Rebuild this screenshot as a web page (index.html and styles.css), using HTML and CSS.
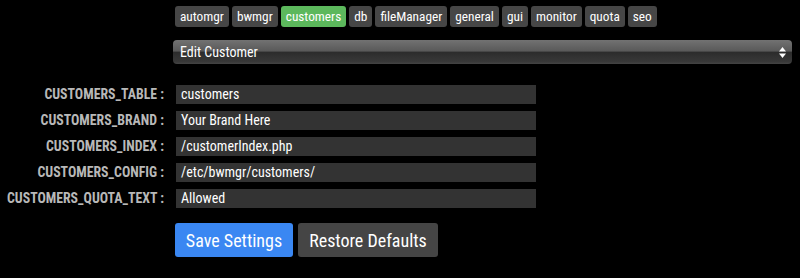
FILE: index.html
```html
<!DOCTYPE html>
<html>
<head>
<meta charset="utf-8">
<link rel="stylesheet" href="styles.css">
</head>
<body>
<div class="page">
  <div class="tabs">
    <span class="tab">automgr</span>
    <span class="tab">bwmgr</span>
    <span class="tab active">customers</span>
    <span class="tab">db</span>
    <span class="tab">fileManager</span>
    <span class="tab">general</span>
    <span class="tab">gui</span>
    <span class="tab">monitor</span>
    <span class="tab">quota</span>
    <span class="tab">seo</span>
  </div>
  <div class="select">
    <span class="select-text">Edit Customer</span>
    <svg class="arrows" width="7" height="11" viewBox="0 0 7 11"><polygon points="3.5,0 7,4.5 0,4.5" fill="#fff"/><polygon points="0,6.5 7,6.5 3.5,11" fill="#fff"/></svg>
  </div>
  <div class="form">
    <label class="label">CUSTOMERS_TABLE :</label>
    <div class="input">customers</div>
    <label class="label">CUSTOMERS_BRAND :</label>
    <div class="input">Your Brand Here</div>
    <label class="label">CUSTOMERS_INDEX :</label>
    <div class="input">/customerIndex.php</div>
    <label class="label">CUSTOMERS_CONFIG :</label>
    <div class="input">/etc/bwmgr/customers/</div>
    <label class="label">CUSTOMERS_QUOTA_TEXT :</label>
    <div class="input">Allowed</div>
  </div>
  <div class="buttons">
    <button class="btn btn-primary">Save Settings</button>
    <button class="btn btn-default">Restore Defaults</button>
  </div>
</div>
</body>
</html>
```

FILE: styles.css
```css
html, body {
  margin: 0;
  padding: 0;
  background: #000;
  font-family: "Roboto Condensed", "Liberation Sans Narrow", "Arial Narrow", Roboto, sans-serif;
  color: #fff;
}
.page {
  width: 800px;
  height: 278px;
  overflow: hidden;
}
.tabs {
  display: flex;
  gap: 3px;
  padding: 6px 0 0 175px;
}
.tab {
  background: #464646;
  color: #fff;
  font-size: 13.3px;
  line-height: 21px;
  height: 21px;
  padding: 0 5px;
  border-radius: 3px;
}
.tab.active {
  background: #5cb85c;
}
.select {
  margin: 13px 0 0 173px;
  width: 619px;
  height: 24px;
  box-sizing: border-box;
  border-radius: 4px;
  background: linear-gradient(#727272 0%, #5a5a5a 45%, #2c2c2c 52%, #383838 90%, #444 100%);
  display: flex;
  align-items: center;
  justify-content: space-between;
  padding: 0 6px 0 7px;
}
.select-text {
  font-size: 14px;
}
.form {
  display: grid;
  grid-template-columns: 164px 360px;
  column-gap: 12px;
  row-gap: 7px;
  margin-top: 21px;
}
.label {
  text-align: right;
  font-size: 13.8px;
  font-weight: bold;
  color: #b8b8b8;
  line-height: 19px;
  white-space: nowrap;
}
.input {
  background: #333;
  height: 19px;
  line-height: 19px;
  font-size: 14px;
  padding: 0 5px;
}
.buttons {
  display: flex;
  gap: 5px;
  margin: 15px 0 0 175px;
}
.btn {
  font-family: inherit;
  font-size: 18px;
  height: 34px;
  color: #fff;
  border: none;
  border-radius: 3px;
  padding: 0 10px;
  white-space: nowrap;
}
.btn-primary {
  background: #3a87f2;
  width: 118px;
}
.btn-default {
  background: #454545;
  width: 140px;
}
```
